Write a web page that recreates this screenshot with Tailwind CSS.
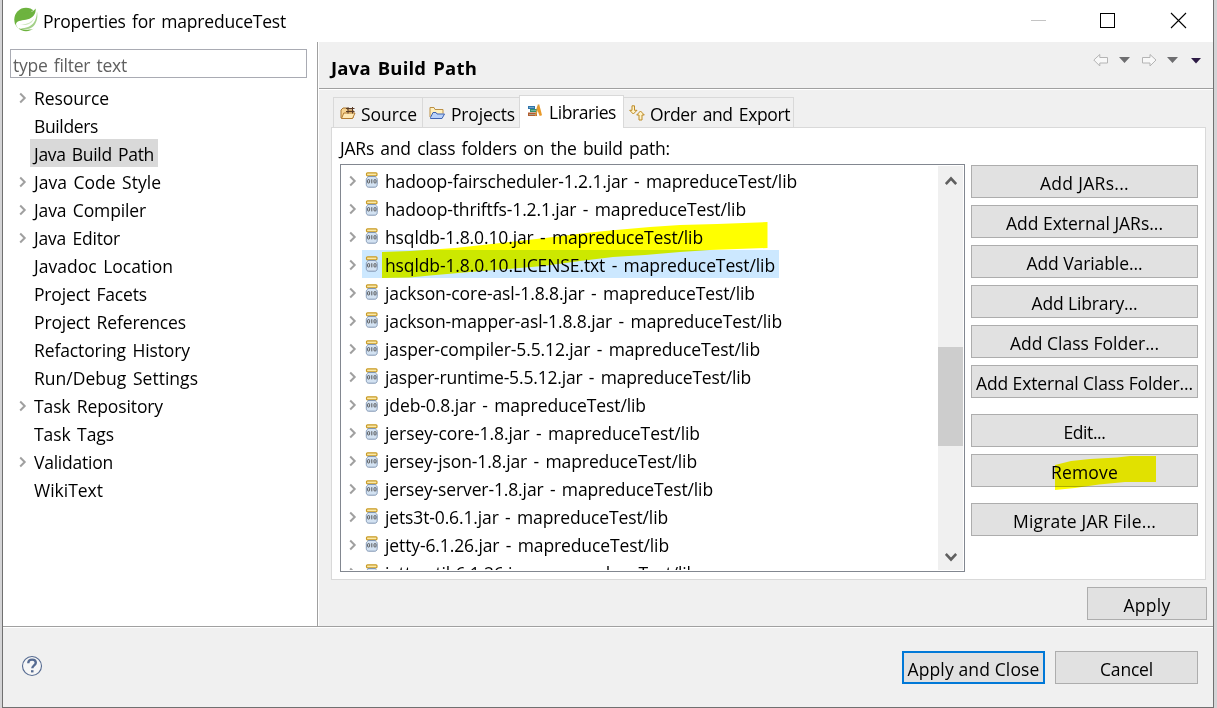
<!DOCTYPE html>
<html lang="en">
<head>
<meta charset="utf-8">
<title>Properties for mapreduceTest</title>
<script src="https://cdn.jsdelivr.net/npm/@tailwindcss/browser@4"></script>
</head>
<body class="w-[1217px] h-[708px] overflow-hidden bg-[#d4d4d6] pl-[2px] pr-[3px] font-['Open_Sans','Noto_Sans',sans-serif] text-[17.5px] leading-[28px] text-black whitespace-nowrap [word-spacing:2px]">
<svg class="hidden">
  <symbol id="chev" viewBox="0 0 8 12"><path d="M1.2 1.5 5.7 6 1.2 10.500" fill="none" stroke="#a0a0a0" stroke-width="2"/></symbol>
  <symbol id="jar" viewBox="0 0 14 16">
    <rect x="1.500" y=".8" width="10.500" height="3" rx="1" fill="#fbe9a8" stroke="#c89a25" stroke-width="1.200"/>
    <path d="M3 4.500h7.500c0 1 1.700 1.300 1.700 2.800v5.200c0 1.700-1 2.700-2.300 2.700H3.600c-1.300 0-2.300-1-2.300-2.700V7.300C1.300 5.800 3 5.500 3 4.500z" fill="#d3e2f2" stroke="#8196b2"/>
    <g fill="none" stroke="#4c4c4c" stroke-width=".9"><rect x="2.600" y="7.600" width="2" height="3.400" rx=".8"/><path d="M6.800 7.200v4.200"/><rect x="9" y="7.600" width="2" height="3.400" rx=".8"/></g>
  </symbol>
</svg>
<div class="flex h-[708px] flex-col border-x border-b border-[#707070] bg-[#f0f0f0]">
  <header class="flex h-[42px] shrink-0 items-center bg-white pl-[10px]">
    <svg class="mb-[3px] size-[26px]" viewBox="0 0 26 26">
      <circle cx="13" cy="12.500" r="11.700" fill="#6db33f"/>
      <path d="M22.500 1.500 25 3v15l-3.500 3.500c-3 1.500-9 1.500-13.500.5-3-.8-5-2.500-5-5C4.500 11 9 9 14 8z" fill="#fff"/>
      <path d="M22.700 1.500C21 4 19 4.800 15 5.500 8.500 6.500 2.500 9 1.800 17c3.500-4 7.700-3.200 13-4.700 5-1.400 8.200-5 7.900-10.800z" fill="#6db33f"/>
      <path d="M24 4.500c1.200 6-.5 12.500-4.500 15.500-3.500 2.500-8 2.500-12.500 1.500 6.500-.3 10.500-2 13.500-5.500 2.200-2.800 3.200-6.500 3.500-11.500z" fill="#a3d088"/>
      <path d="M7 17.500c5-.2 10-.8 14-6-2 5.500-7 7.500-14 6z" fill="#cfe8c0"/>
      <circle cx="5.500" cy="20.700" r="1" fill="#fff"/>
    </svg>
    <span data-w="243" class="ml-[4px] text-[17.5px]">Properties for mapreduceTest</span>
    <svg class="ml-auto mr-[26px] h-[20px] w-[158px]" viewBox="0 0 158 20" fill="none" shape-rendering="crispEdges">
      <path d="M1.500 9.500h15" stroke="#c4c4c4"/><rect x="71.500" y="2.500" width="14" height="14" stroke="#000" stroke-width="1"/>
      <path d="m142 2 15 15m0-15-15 15" stroke="#000" stroke-width="1.100" shape-rendering="auto"/>
    </svg>
  </header>
  <main class="flex h-[584px] shrink-0">
    <aside class="w-[315px] shrink-0 border-r border-[#a0a0a0] bg-white pl-[7px] pt-[7px]">
      <div class="flex h-[29px] w-[297px] items-center border border-[#a9abb3] pl-[2px] pt-[3px] text-[#606060]"><span data-w="114">type filter text</span></div>
      <div id="tree" class="mt-[5px] flex flex-col"></div>
    </aside>
    <section class="flex min-w-0 flex-1 flex-col border-l border-white">
      <div class="flex h-[47px] shrink-0 justify-between border-b border-[#a0a0a0] pl-[12px]">
        <h1 data-w="146" class="mt-[12px] h-[28px] text-[18.5px] font-bold">Java Build Path</h1>
        <svg class="mr-[10px] mt-[9px] h-[20px] w-[110px]" viewBox="0 0 110 20">
          <g fill="#f8f8f8" stroke="#b4b4b4" stroke-linejoin="round"><path d="M.8 9 6.800 3.500V6.500H14.500V12H6.800V15z"/><path d="M63 9 57 3.500V6.500H49.500V12H57V15z"/></g>
          <path d="M26 6h11l-5.500 6zM74 6h11l-5.500 6z" fill="#6e6e70"/><path d="M98 7h10l-5 5.500z" fill="#2d1b45"/>
        </svg>
      </div>
      <div class="flex flex-col border-t border-white pl-[12px] pr-[7px]">
        <nav class="z-10 mb-[-1px] mt-[5px] flex h-[33px] items-end pl-[2px]">
          <div class="flex h-[31px] w-[90px] border border-[#d9d9d9] pl-[6px]">
            <svg class="mt-[8px] size-[16px] shrink-0" viewBox="0 0 16 16"><path d="M1 12V4l2-2h4l1 2h5v8z" fill="#f6d391" stroke="#a9762f"/><path d="m1.500 12.500 2.300-5.500h11.200l-2.500 5.500z" fill="#ffe9b5" stroke="#b27a30"/><path d="M6 2.500h8.500M6 5.500h8.500M8 1v6.500M12.500 1v6.500" stroke="#593a27" stroke-width="1"/></svg>
            <span data-w="56" class="ml-[5px] mt-[2px]">Source</span>
          </div>
          <div class="flex h-[31px] w-[96px] border-y border-[#d9d9d9] pl-[6px]">
            <svg class="mt-[8px] size-[16px] shrink-0" viewBox="0 0 16 16"><path d="M1 11V1.500h4l1 2h8v4" fill="#fff0bd" stroke="#bc9044"/><path d="m1.500 11.500 2.500-5h3L8 8h7.500L13 12.500H1.500z" fill="#b9d2fa" stroke="#3f63b0"/></svg>
            <span data-w="64" class="ml-[6px] mt-[2px]">Projects</span>
          </div>
          <div class="flex h-[33px] w-[105px] border-x border-t border-[#d9d9d9] bg-white pl-[7px]">
            <svg class="mt-[8px] size-[16px] shrink-0" viewBox="0 0 16 16"><path d="M1 2h7v3H1z" fill="#2f73ad"/><path d="M3 5h7v3H3z" fill="#37916a"/><path d="M1 8.500h9V12H1z" fill="#b35c2e"/><path d="M2 3.500h5M4 6.500h5M2 10.500h7" stroke="#9ed0cb" stroke-width=".6"/><path d="m12.200.2 2.800 11-2.300.8L9.500 4z" fill="#e99a29"/><path d="M8.500 12 11.500.5" stroke="#d99a3a" stroke-width="1.300"/></svg>
            <span data-w="67" class="ml-[6px] mt-[2px]">Libraries</span>
          </div>
          <div class="flex h-[31px] w-[170px] border-y border-r border-[#d9d9d9] pl-[5px]">
            <svg class="mt-[7px] size-[16px] shrink-0" viewBox="0 0 16 16" fill="#fff3c8" stroke="#bd8a25" stroke-linejoin="round"><path d="M3 .8h2.500v4.500H8L4.300 9 .7 5.300H3z"/><path d="M10 15h3v-5h2.300L11.500 6 7.700 10H10z"/></svg>
            <span data-w="140" class="ml-[5px] mt-[2px]">Order and Export</span>
          </div>
        </nav>
        <div class="flex h-[453px] w-[875px] flex-col border border-[#d9d9d9] bg-white pl-[8px]">
          <span data-w="330" class="mt-[6px] mb-px self-start leading-[29px]">JARs and class folders on the build path:</span>
          <div class="flex gap-[6px]">
            <div class="relative flex h-[408px] w-[625px] border border-[#828790] p-px">
              <div class="h-[404px] flex-1 overflow-hidden" id="list"></div>
              <div class="flex w-[25px] flex-col items-center bg-[#f0f0f0] pt-[10px]">
                <svg class="h-[10px] w-[12px]" viewBox="0 0 12 10"><path d="M.8 8 6 2.500 11.200 8" fill="none" stroke="#606060" stroke-width="2.600"/></svg>
                <div class="mt-[161px] h-[99px] w-[25px] bg-[#cdcdcd]"></div>
                <svg class="mt-[106px] h-[10px] w-[12px]" viewBox="0 0 12 10"><path d="M.8 2 6 7.500 11.200 2" fill="none" stroke="#606060" stroke-width="2.600"/></svg>
              </div>
              <svg class="absolute left-[41px] top-[56px] h-[58px] w-[386px] mix-blend-multiply" viewBox="382 221 386 58"><path fill="#ff0" d="M382 252 410 251 455 248 510 242 545 238 590 232.500 610 230.500 650 227 680 225 717 224 767.500 222V248L710 250 680 252 645 255 613 257 580 261 543 266 470 272 430 275.500 410 277.500 382 278z"/></svg>
            </div>
            <div id="buttons" class="relative flex w-[227px] flex-col gap-[7px] pt-[1px]">
              <svg class="absolute left-[84px] top-[291px] z-10 h-[36px] w-[102px] mix-blend-multiply" viewBox="1055 455 102 36"><path fill="#ff0" d="M1055 465 1063 463 1071 461 1090 459 1117 457.500 1130 456H1156V482H1125L1099 484.500 1075 488 1055 490z"/></svg>
            </div>
          </div>
        </div>
        <button class="mt-[7px] flex h-[33px] w-[120px] items-center justify-center self-end border border-[#adadad] bg-[#e1e1e1] pt-[3px] mr-[-1px]"><span data-w="47">Apply</span></button>
      </div>
    </section>
  </main>
  <footer class="relative flex flex-1 border-t border-[#a0a0a0] pl-[18px] shadow-[inset_0_1px_0_white]">
    <svg class="mt-[28px] size-[22px]" viewBox="0 0 22 22" fill="none" stroke="#566b91"><circle cx="11" cy="11" r="9.500" fill="#f6f6f6" stroke-width="1.100"/><path d="M7.300 8.200c0-2.500 1.600-3.600 3.800-3.600s3.700 1.200 3.700 3.200c0 2.500-3.500 2.700-3.500 5.500" stroke-width="2.400"/><path d="M10 15.200h2.500v2.200H10z" fill="#566b91" stroke="none"/></svg>
    <button class="ml-auto mt-[24px] flex h-[33px] w-[143px] items-center justify-center border-2 border-[#0078d7] bg-[#e1e1e1] pt-[3px]"><span data-w="132">Apply and Close</span></button>
    <button class="ml-[10px] mr-[15px] mt-[24px] flex h-[33px] w-[143px] items-center justify-center border border-[#adadad] bg-[#e1e1e1] pt-[3px]"><span data-w="53">Cancel</span></button>
  </footer>
</div>
<script>
const treeChevron = '<svg class="absolute left-[9px] top-[9px] h-[12px] w-[8px]"><use href="#chev"/></svg>';
const listChevron = '<svg class="absolute left-[7px] top-[9px] h-[12px] w-[8px]"><use href="#chev"/></svg>';
const pages = [['Resource',75,1],['Builders',64,0],['Java Build Path',120,0],['Java Code Style',127,1],['Java Compiler',112,1],['Java Editor',86,1],['Javadoc Location',139,0],['Project Facets',113,0],['Project References',152,0],['Refactoring History',156,0],['Run/Debug Settings',164,0],['Task Repository',129,1],['Task Tags',80,0],['Validation',79,1],['WikiText',69,0]];
document.getElementById('tree').innerHTML = pages.map(([name, width, parent]) =>
  `<div class="relative flex h-[28px] pl-[20px]">${parent ? treeChevron : ''}<div class="pl-[4px] pr-[4px] pt-[1px] ${name === 'Java Build Path' ? 'bg-[#d9d9d9]' : ''}"><span class="block" data-w="${width}">${name}</span></div></div>`).join('');
const jars = [['hadoop-fairscheduler-1.2.1.jar',412],['hadoop-thriftfs-1.2.1.jar',361],['hsqldb-1.8.0.10.jar',318],['hsqldb-1.8.0.10.LICENSE.txt',390],['jackson-core-asl-1.8.8.jar',370],['jackson-mapper-asl-1.8.8.jar',397],['jasper-compiler-5.5.12.jar',375],['jasper-runtime-5.5.12.jar',366],['jdeb-0.8.jar',261],['jersey-core-1.8.jar',315],['jersey-json-1.8.jar',312],['jersey-server-1.8.jar',328],['jets3t-0.6.1.jar',283],['jetty-6.1.26.jar',284],['jetty-util-6.1.26.jar',312]];
document.getElementById('list').innerHTML = jars.map(([name, width], i) =>
  `<div class="relative flex h-[28px] pl-[20px]">${listChevron}<div class="flex h-[28px] pl-[3px] pr-[4px] ${i === 3 ? 'bg-[#cce8ff]' : ''}"><svg class="mt-[6px] h-[16px] w-[14px]"><use href="#jar"/></svg><span class="ml-[6px] mt-[1px] block" data-w="${width}">${name} - mapreduceTest/lib</span></div></div>`).join('');
const actions = [['Add JARs...',89],['Add External JARs...',157],['Add Variable...',116],['Add Library...',106],['Add Class Folder...',149],['Add External Class Folder...',217],['Edit...',42],['Remove',67],['Migrate JAR File...',143]];
document.getElementById('buttons').insertAdjacentHTML('beforeend', actions.map(([name, width], i) =>
  `<button class="flex h-[33px] shrink-0 items-center justify-center border border-[#adadad] bg-[#e1e1e1] pt-[3px] ${i === 6 || i === 8 ? 'mt-[9px]' : ''}"><span data-w="${width}">${name}</span></button>`).join(''));
/* Space each label's letters so that it takes its nominal width. */
function fitLabels() {
  document.querySelectorAll('[data-w]').forEach(el => {
    el.style.letterSpacing = '0px';
    const range = document.createRange();
    range.selectNodeContents(el);
    const natural = range.getBoundingClientRect().width;
    el.style.letterSpacing = (el.dataset.w - natural) / el.textContent.length + 'px';
  });
}
fitLabels();
window.addEventListener('load', () => { fitLabels(); requestAnimationFrame(fitLabels); });
document.fonts.ready.then(fitLabels);
new ResizeObserver(fitLabels).observe(document.querySelector('header'));
</script>
</body>
</html>
